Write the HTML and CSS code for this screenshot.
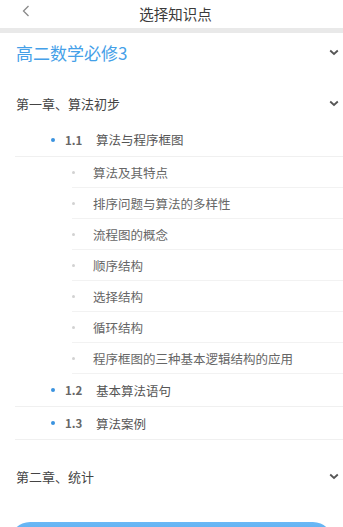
FILE: index.html
```html
<!DOCTYPE html>
<html lang="zh">
<head>
<meta charset="utf-8">
<link rel="stylesheet" href="styles.css">
</head>
<body>
<div class="page">
  <header class="topbar">
    <span class="back"><svg width="8" height="12" viewBox="0 0 8 12"><path d="M6.5 1 L1.5 6 L6.5 11" fill="none" stroke="#8a8a8a" stroke-width="1.3"/></svg></span>
    <span class="title">选择知识点</span>
  </header>
  <div class="band"></div>

  <div class="book-row">
    <span class="book">高二数学必修3</span>
    <svg class="chev" width="10" height="7" viewBox="0 0 10 7"><path d="M1.2 1.5 L5 5 L8.8 1.5" fill="none" stroke="#555" stroke-width="1.8"/></svg>
  </div>

  <div class="chapter ch1">
    <span>第一章、算法初步</span>
    <svg class="chev" width="10" height="7" viewBox="0 0 10 7"><path d="M1.2 1.5 L5 5 L8.8 1.5" fill="none" stroke="#555" stroke-width="1.8"/></svg>
  </div>

  <div class="section">
    <span class="dot"></span><span class="num">1.1</span><span class="stitle">算法与程序框图</span>
  </div>
  <ul class="subs">
    <li><span class="sdot"></span><span>算法及其特点</span></li>
    <li><span class="sdot"></span><span>排序问题与算法的多样性</span></li>
    <li><span class="sdot"></span><span>流程图的概念</span></li>
    <li><span class="sdot"></span><span>顺序结构</span></li>
    <li><span class="sdot"></span><span>选择结构</span></li>
    <li><span class="sdot"></span><span>循环结构</span></li>
    <li><span class="sdot"></span><span>程序框图的三种基本逻辑结构的应用</span></li>
  </ul>
  <div class="section s12">
    <span class="dot"></span><span class="num">1.2</span><span class="stitle">基本算法语句</span>
  </div>
  <div class="section s13">
    <span class="dot"></span><span class="num">1.3</span><span class="stitle">算法案例</span>
  </div>

  <div class="chapter ch2">
    <span>第二章、统计</span>
    <svg class="chev" width="10" height="7" viewBox="0 0 10 7"><path d="M1.2 1.5 L5 5 L8.8 1.5" fill="none" stroke="#555" stroke-width="1.8"/></svg>
  </div>

  <div class="btn-wrap"><div class="btn"></div></div>
</div>
</body>
</html>
```
FILE: styles.css
```css
* { box-sizing: border-box; }
html, body { margin: 0; padding: 0; background: #fff; }
body {
  font-family: "Noto Sans CJK SC", "Noto Sans", sans-serif;
  color: #333;
  overflow: hidden;
}
.page { width: 343px; height: 527px; overflow: hidden; }

.topbar {
  height: 28px;
  position: relative;
  display: flex;
  align-items: center;
  justify-content: center;
}
.back {
  position: absolute;
  left: 22px;
  top: 5px;
  display: flex;
}
.title {
  font-size: 14.5px;
  color: #3a3a3a;
  padding-left: 8px;
  line-height: 1;
}
.band { height: 5px; background: #e9e9e9; }

.book-row {
  height: 38px;
  display: flex;
  align-items: center;
  justify-content: space-between;
  padding: 0 4px 0 16px;
}
.book {
  font-size: 17px;
  color: #44a0e8;
  line-height: 1;
}
.chev { display: block; }

.chapter {
  height: 40px;
  display: flex;
  align-items: center;
  justify-content: space-between;
  padding: 0 4px 0 16px;
  font-size: 13px;
  color: #444;
}
.ch1 { margin-top: 12px; }
.ch2 { margin-top: 16px; }

.section {
  height: 34px;
  display: flex;
  align-items: center;
  margin-left: 15px;
  padding-left: 36px;
  border-bottom: 1px solid #f0f0f0;
  font-size: 12.5px;
  color: #555;
}
.s12, .s13 { height: 33px; }
.dot {
  width: 4px;
  height: 4px;
  border-radius: 50%;
  background: #3a93df;
  margin-right: 10px;
}
.num {
  width: 31px;
  font-size: 11.5px;
  font-weight: bold;
  color: #666;
}
.stitle { color: #555; }

.subs { list-style: none; margin: 0; padding: 0; }
.subs li {
  height: 31px;
  display: flex;
  align-items: center;
  margin-left: 72px;
  font-size: 12.5px;
  color: #666;
  border-bottom: 1px solid #f2f2f2;
  position: relative;
  padding-left: 21px;
}
.sdot {
  position: absolute;
  left: 0;
  top: 14px;
  width: 3px;
  height: 3px;
  border-radius: 50%;
  background: #d2d2d2;
}

.btn-wrap {
  margin-top: 26px;
  padding: 0 10px;
}
.btn {
  height: 44px;
  border-radius: 20px;
  background: linear-gradient(180deg, #6ab8f5 0%, #3e97ea 100%);
}
```
